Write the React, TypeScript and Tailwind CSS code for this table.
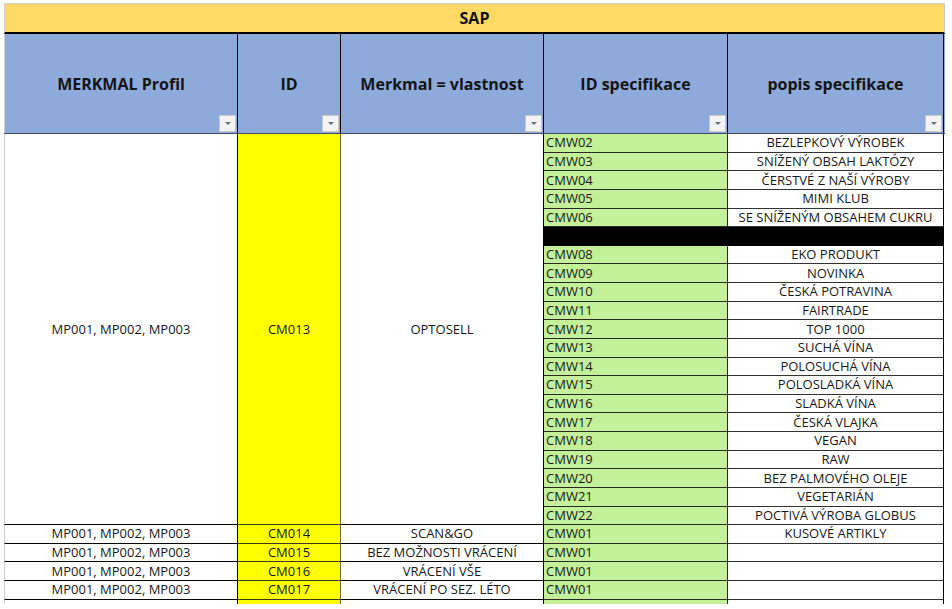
import React from 'react';

const specs: [string, string][] = [
  ['CMW02', 'BEZLEPKOVÝ VÝROBEK'],
  ['CMW03', 'SNÍŽENÝ OBSAH LAKTÓZY'],
  ['CMW04', 'ČERSTVÉ Z NAŠÍ VÝROBY'],
  ['CMW05', 'MIMI KLUB'],
  ['CMW06', 'SE SNÍŽENÝM OBSAHEM CUKRU'],
  ['', ''],
  ['CMW08', 'EKO PRODUKT'],
  ['CMW09', 'NOVINKA'],
  ['CMW10', 'ČESKÁ POTRAVINA'],
  ['CMW11', 'FAIRTRADE'],
  ['CMW12', 'TOP 1000'],
  ['CMW13', 'SUCHÁ VÍNA'],
  ['CMW14', 'POLOSUCHÁ VÍNA'],
  ['CMW15', 'POLOSLADKÁ VÍNA'],
  ['CMW16', 'SLADKÁ VÍNA'],
  ['CMW17', 'ČESKÁ VLAJKA'],
  ['CMW18', 'VEGAN'],
  ['CMW19', 'RAW'],
  ['CMW20', 'BEZ PALMOVÉHO OLEJE'],
  ['CMW21', 'VEGETARIÁN'],
  ['CMW22', 'POCTIVÁ VÝROBA GLOBUS'],
];

const singles = [
  { id: 'CM014', name: 'SCAN&GO', spec: 'CMW01', desc: 'KUSOVÉ ARTIKLY' },
  { id: 'CM015', name: 'BEZ MOŽNOSTI VRÁCENÍ', spec: 'CMW01', desc: '' },
  { id: 'CM016', name: 'VRÁCENÍ VŠE', spec: 'CMW01', desc: '' },
  { id: 'CM017', name: 'VRÁCENÍ PO SEZ. LÉTO', spec: 'CMW01', desc: '' },
];

const headers = ['MERKMAL Profil', 'ID', 'Merkmal = vlastnost', 'ID specifikace', 'popis specifikace'];

const FilterButton = () => (
  <div className="absolute right-[1px] bottom-[1px] w-[17px] h-[17px] bg-[#f4f4f4] border border-[#c9c9c9] flex items-center justify-center">
    <div className="w-0 h-0 border-l-[3px] border-r-[3px] border-t-[3px] border-l-transparent border-r-transparent border-t-[#6f6f6f]" />
  </div>
);

export default function App() {
  return (
    <div
      className="w-[952px] h-[609px] overflow-hidden bg-white pt-[3px] text-[#181818]"
      style={{ fontFamily: '"Open Sans", "Liberation Sans", sans-serif' }}
    >
      <div className="ml-[4px] w-[941px]">
        {/* SAP band */}
        <div className="h-[31px] bg-[#ffd966] border-t border-[#d0d0d0] border-b-2 border-b-black border-l border-l-[#d0d0d0] border-r border-r-[#c8c8c8] flex items-center justify-center text-[16px] font-bold text-[#111]">
          SAP
        </div>

        {/* Header row */}
        <div className="grid grid-cols-[234px_103px_203px_184px_216px] h-[100px] bg-[#8eaadb] border-b border-[#3f4d6a]">
          {headers.map((h, i) => (
            <div
              key={h}
              className={`relative flex items-center justify-center text-[16px] font-bold text-[#141414] border-r border-black ${
                i === 0 ? 'border-l border-l-[#d0d0d0]' : ''
              }`}
            >
              <span>{h}</span>
              <FilterButton />
            </div>
          ))}
        </div>

        {/* Data */}
        <div className="grid grid-cols-[234px_103px_203px_184px_216px] auto-rows-[18.64px] text-[13px] leading-none">
          <div className="row-span-21 border-l border-l-[#d0d0d0] border-r border-r-black border-b border-b-black flex items-center justify-center">
            MP001, MP002, MP003
          </div>
          <div className="row-span-21 bg-[#ffff00] border-r border-r-[#6e6a2a] border-b border-b-[#3a3a20] flex items-center justify-center">
            CM013
          </div>
          <div className="row-span-21 border-r border-r-black border-b border-b-black flex items-center justify-center">
            OPTOSELL
          </div>
          {specs.map(([code, desc], i) =>
            code === '' ? (
              <React.Fragment key={i}>
                <div className="bg-black" />
                <div className="bg-black" />
              </React.Fragment>
            ) : (
              <React.Fragment key={i}>
                <div className="bg-[#c4f09a] border-r border-r-[#2a2a2a] border-b border-b-[#2a2a2a] flex items-center pl-[2px]">
                  {code}
                </div>
                <div className="border-r border-r-black border-b border-b-[#333] flex items-center justify-center">
                  {desc}
                </div>
              </React.Fragment>
            )
          )}
          {singles.map((r) => (
            <React.Fragment key={r.id}>
              <div className="border-l border-l-[#d0d0d0] border-r border-r-black border-b border-b-black flex items-center justify-center">
                MP001, MP002, MP003
              </div>
              <div className="bg-[#ffff00] border-r border-r-[#6e6a2a] border-b border-b-[#3a3a20] flex items-center justify-center">
                {r.id}
              </div>
              <div className="border-r border-r-black border-b border-b-black flex items-center justify-center">
                {r.name}
              </div>
              <div className="bg-[#c4f09a] border-r border-r-[#2a2a2a] border-b border-b-[#2a2a2a] flex items-center pl-[2px]">
                {r.spec}
              </div>
              <div className="border-r border-r-black border-b border-b-[#333] flex items-center justify-center">
                {r.desc}
              </div>
            </React.Fragment>
          ))}
        </div>
        {/* partial next row */}
        <div className="grid grid-cols-[234px_103px_203px_184px_216px] h-[4px]">
          <div className="border-l border-l-[#d0d0d0] border-r border-r-black" />
          <div className="bg-[#ffff00] border-r border-r-[#6e6a2a]" />
          <div className="border-r border-r-black" />
          <div className="bg-[#c4f09a] border-r border-r-[#2a2a2a]" />
          <div className="border-r border-r-black" />
        </div>
      </div>
    </div>
  );
}
